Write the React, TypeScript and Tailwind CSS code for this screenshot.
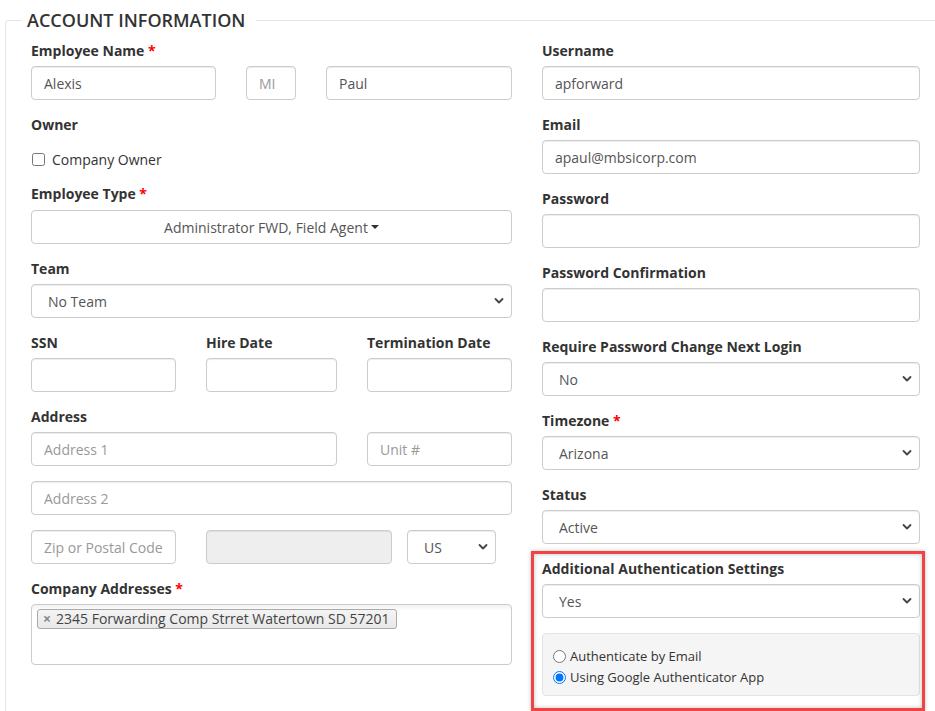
import React from "react";

const font = { fontFamily: '"Open Sans", "Liberation Sans", Arial, sans-serif' };

const inputCls =
  "block h-[34px] w-full rounded-[4px] border border-[#ccc] bg-white px-[12px] text-[14px] text-[#555] shadow-[inset_0_1px_1px_rgba(0,0,0,0.075)] placeholder:text-[#999] outline-none";

function Label({ children, req, className = "mb-[5px]" }: { children: React.ReactNode; req?: boolean; className?: string }) {
  return (
    <label className={"block text-[14px] font-bold leading-[20px] text-[#333] " + className}>
      {children}
      {req && <span className="text-[#f00]"> *</span>}
    </label>
  );
}

function Chevron() {
  return (
    <svg
      className="pointer-events-none absolute right-[8px] top-1/2 h-[8px] w-[10px] -translate-y-1/2"
      viewBox="0 0 10 8"
      fill="none"
    >
      <path d="M1.5 2 L5 5.5 L8.5 2" stroke="#444" strokeWidth="1.8" strokeLinecap="round" strokeLinejoin="round" />
    </svg>
  );
}

function Select({ value, className = "" }: { value: string; className?: string }) {
  return (
    <div className={"relative " + className}>
      <select
        defaultValue={value}
        className="block h-[34px] w-full appearance-none rounded-[4px] border border-[#ccc] bg-white pl-[16px] text-[14px] text-[#555] shadow-[inset_0_1px_1px_rgba(0,0,0,0.075)] outline-none"
      >
        <option>{value}</option>
      </select>
      <Chevron />
    </div>
  );
}

function Input({ value, placeholder, className = "", disabled }: { value?: string; placeholder?: string; className?: string; disabled?: boolean }) {
  return (
    <input
      defaultValue={value}
      placeholder={placeholder}
      disabled={disabled}
      className={inputCls + " " + (disabled ? "!bg-[#eee] " : "") + className}
    />
  );
}

export default function App() {
  return (
    <div className="h-[711px] w-[935px] overflow-hidden bg-white pl-[5px] pt-[9px]" style={font}>
      <fieldset className="m-0 min-w-0 rounded-tl-[4px] border-l border-t border-[#e5e5e5] p-0">
        <legend className="ml-[16px] px-[5px] pr-[11px] text-[18px] font-semibold uppercase leading-[22px] tracking-[0px] text-[#333]">
          Account Information
        </legend>
        <div className="flex gap-[30px] pl-[25px] pr-[15px] pt-[10px]">
          {/* Left column */}
          <div className="w-[481px]">
            <div className="mb-[15px]">
              <Label req>Employee Name</Label>
              <div className="flex gap-[30px]">
                <Input value="Alexis" className="!w-[185px]" />
                <Input placeholder="MI" className="!w-[50px]" />
                <Input value="Paul" className="!w-[186px]" />
              </div>
            </div>

            <div className="mb-[15px]">
              <Label>Owner</Label>
              <div className="mt-[14px] flex h-[20px] items-center gap-[7px] pl-[1px]">
                <input type="checkbox" className="m-0 h-[13px] w-[13px]" />
                <span className="text-[14px] text-[#333]">Company Owner</span>
              </div>
            </div>

            <div className="mb-[15px]">
              <Label req className="mb-[6px]">Employee Type</Label>
              <button className="flex h-[34px] w-full items-center justify-center rounded-[4px] border border-[#ccc] bg-white text-[14px] text-[#555]">
                Administrator FWD, Field Agent
                <span className="ml-[3px] inline-block h-0 w-0 border-x-[4px] border-t-[4px] border-x-transparent border-t-[#333]" />
              </button>
            </div>

            <div className="mb-[15px]">
              <Label>Team</Label>
              <Select value="No Team" />
            </div>

            <div className="mb-[15px] flex gap-[30px]">
              <div className="w-[145px]">
                <Label>SSN</Label>
                <Input />
              </div>
              <div className="w-[131px]">
                <Label>Hire Date</Label>
                <Input />
              </div>
              <div className="w-[145px]">
                <Label>Termination Date</Label>
                <Input />
              </div>
            </div>

            <div className="mb-[15px]">
              <Label>Address</Label>
              <div className="mb-[15px] flex gap-[30px]">
                <Input placeholder="Address 1" className="!w-[306px]" />
                <Input placeholder="Unit #" className="!w-[145px]" />
              </div>
              <Input placeholder="Address 2" className="mb-[15px]" />
              <div className="flex">
                <Input placeholder="Zip or Postal Code" className="!w-[145px]" />
                <Input disabled className="ml-[30px] !w-[186px]" />
                <Select value="US" className="ml-[15px] w-[89px]" />
              </div>
            </div>

            <div className="mb-[15px]">
              <Label req>Company Addresses</Label>
              <div className="flex h-[61px] w-full items-start rounded-[4px] border border-[#ccc] bg-white bg-gradient-to-b from-[#f2f2f2] via-white to-white px-[5px] pt-[4px] [background-repeat:no-repeat] [background-size:100%_12px]">
                <span className="flex h-[20px] items-center rounded-[3px] border border-[#aaa] bg-gradient-to-b from-[#f4f4f4] to-[#e8e8e8] pl-[5px] pr-[6px] text-[14px] leading-[18px] text-[#444]">
                  <span className="mr-[5px] text-[14px] font-bold leading-none text-[#888]">×</span>
                  2345 Forwarding Comp Strret Watertown SD 57201
                </span>
              </div>
            </div>
          </div>

          {/* Right column */}
          <div className="w-[378px]">
            <div className="mb-[15px]">
              <Label>Username</Label>
              <Input value="apforward" />
            </div>
            <div className="mb-[15px]">
              <Label>Email</Label>
              <Input value="apaul@mbsicorp.com" />
            </div>
            <div className="mb-[15px]">
              <Label>Password</Label>
              <Input />
            </div>
            <div className="mb-[15px]">
              <Label>Password Confirmation</Label>
              <Input />
            </div>
            <div className="mb-[15px]">
              <Label>Require Password Change Next Login</Label>
              <Select value="No" />
            </div>
            <div className="mb-[15px]">
              <Label req>Timezone</Label>
              <Select value="Arizona" />
            </div>
            <div className="mb-[15px]">
              <Label>Status</Label>
              <Select value="Active" />
            </div>
            <div className="relative pb-[15px]">
              <Label>Additional Authentication Settings</Label>
              <Select value="Yes" />
              <div className="mt-[15px] rounded-[4px] border border-[#e3e3e3] bg-[#f5f5f5] pb-[7px] pl-[10px] pt-[12px]">
                <label className="flex h-[21px] items-center gap-[4px] text-[13px] text-[#333]">
                  <input type="radio" name="auth" className="m-0 h-[13px] w-[13px]" />
                  Authenticate by Email
                </label>
                <label className="flex h-[21px] items-center gap-[4px] text-[13px] text-[#333]">
                  <input type="radio" name="auth" defaultChecked className="m-0 h-[13px] w-[13px]" />
                  Using Google Authenticator App
                </label>
              </div>
              <div className="pointer-events-none absolute -left-[11px] -right-[5px] -top-[8px] bottom-0 border-[3px] border-[#f04444] shadow-[0_0_4px_rgba(0,0,0,0.25),inset_0_0_4px_rgba(0,0,0,0.25)]" />
            </div>
          </div>
        </div>
      </fieldset>
    </div>
  );
}
